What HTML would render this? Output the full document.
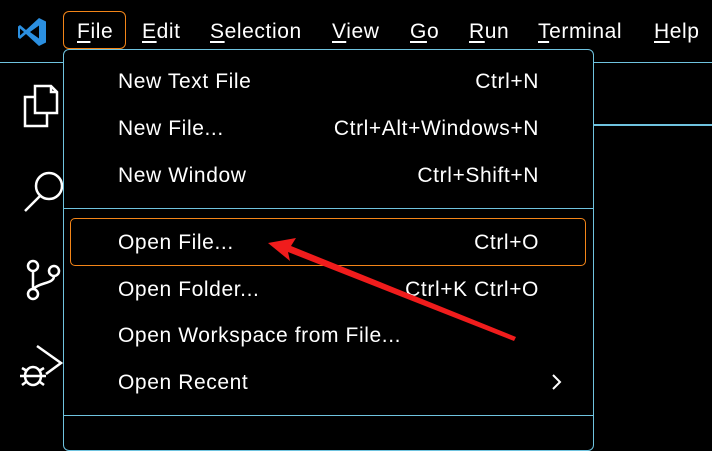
<!DOCTYPE html>
<html><head><style>
body{margin:0;width:712px;height:428px;background:#000;overflow:hidden;position:relative;font-family:"Liberation Sans",sans-serif;color:#fff}
.t{position:absolute;font-size:21px;letter-spacing:0.6px;line-height:24px;white-space:nowrap}
.u{text-decoration:underline;text-underline-offset:3px}
.l{position:absolute;background:#6fc3df}
.r{text-align:right;right:173px}
</style></head><body>
<svg style="position:absolute;left:16px;top:16px" width="32" height="32" viewBox="0 0 32 32">
<path d="M23 2 L30 5.5 V26.5 L23 30 L10 18 L4 23 L2 21.5 V10.5 L4 9 L10 14 Z M23 9.5 L14 16 L23 22.5 Z M4 12.5 V19.5 L8 16 Z" fill="#2b8fe0" fill-rule="evenodd"/>
</svg>
<div style="position:absolute;left:63px;top:11px;width:61px;height:36px;border:1px solid #f38518;border-radius:6px"></div>
<div class="t" style="left:77px;top:20px"><span class="u">F</span>ile</div>
<div class="t" style="left:142px;top:20px"><span class="u">E</span>dit</div>
<div class="t" style="left:210px;top:20px"><span class="u">S</span>election</div>
<div class="t" style="left:332px;top:20px"><span class="u">V</span>iew</div>
<div class="t" style="left:410px;top:20px"><span class="u">G</span>o</div>
<div class="t" style="left:469px;top:20px"><span class="u">R</span>un</div>
<div class="t" style="left:538px;top:20px"><span class="u">T</span>erminal</div>
<div class="t" style="left:654px;top:20px"><span class="u">H</span>elp</div>
<div class="l" style="left:0;top:62px;width:64px;height:1px"></div>
<div class="l" style="left:593px;top:62px;width:119px;height:1px"></div>
<div class="l" style="left:593px;top:124px;width:119px;height:2px"></div>
<svg style="position:absolute;left:0;top:70px" width="63" height="358" viewBox="0 70 63 358" fill="none" stroke="#fff" stroke-width="2.5">
<path d="M35 86 H51 L57 92 V113 H35 Z M51 86 V92 H57"/>
<path d="M35 97 H25 V126 H47 V113"/>
<circle cx="49" cy="186" r="13"/><path d="M40 196 L25 211"/>
<circle cx="33" cy="266" r="5"/><circle cx="33" cy="294" r="5"/><circle cx="54" cy="271" r="5"/>
<path d="M33 271 V289 M54 276 C54 284 40 282 33 289"/>
<path d="M37 346 L61 363 L46 374"/>
<ellipse cx="33" cy="376" rx="8" ry="9"/><path d="M25 376 H41 M22 368 L27 371 M44 368 L39 371 M22 385 L26 382 M44 385 L40 382 M20 376 H25 M41 376 H46"/>
</svg>
<div style="position:absolute;left:63px;top:49px;width:529px;height:400px;border:1px solid #6fc3df;border-radius:6px;background:#000"></div>
<div class="l" style="left:64px;top:208px;width:529px;height:1px"></div>
<div class="l" style="left:64px;top:415px;width:529px;height:1px"></div>
<div style="position:absolute;left:70px;top:218px;width:514px;height:46px;border:1px solid #f38518;border-radius:5px"></div>
<div class="t" style="left:118px;top:70px">New Text File</div><div class="t r" style="top:70px">Ctrl+N</div>
<div class="t" style="left:118px;top:117px">New File...</div><div class="t r" style="top:117px">Ctrl+Alt+Windows+N</div>
<div class="t" style="left:118px;top:164px">New Window</div><div class="t r" style="top:164px">Ctrl+Shift+N</div>
<div class="t" style="left:118px;top:231px">Open File...</div><div class="t r" style="top:231px">Ctrl+O</div>
<div class="t" style="left:118px;top:278px">Open Folder...</div><div class="t r" style="top:278px">Ctrl+K Ctrl+O</div>
<div class="t" style="left:118px;top:324px">Open Workspace from File...</div>
<div class="t" style="left:118px;top:371px">Open Recent</div>
<svg style="position:absolute;left:550px;top:373px" width="14" height="18"><path d="M3 2 L10 9 L3 16" stroke="#fff" stroke-width="2" fill="none"/></svg>
<svg style="position:absolute;left:0;top:0" width="712" height="428"><path d="M268 243 L296 238 L291 246 L516 337 L514 341 L288 252 L290 261 Z" fill="#f01c1c"/></svg>
</body></html>
